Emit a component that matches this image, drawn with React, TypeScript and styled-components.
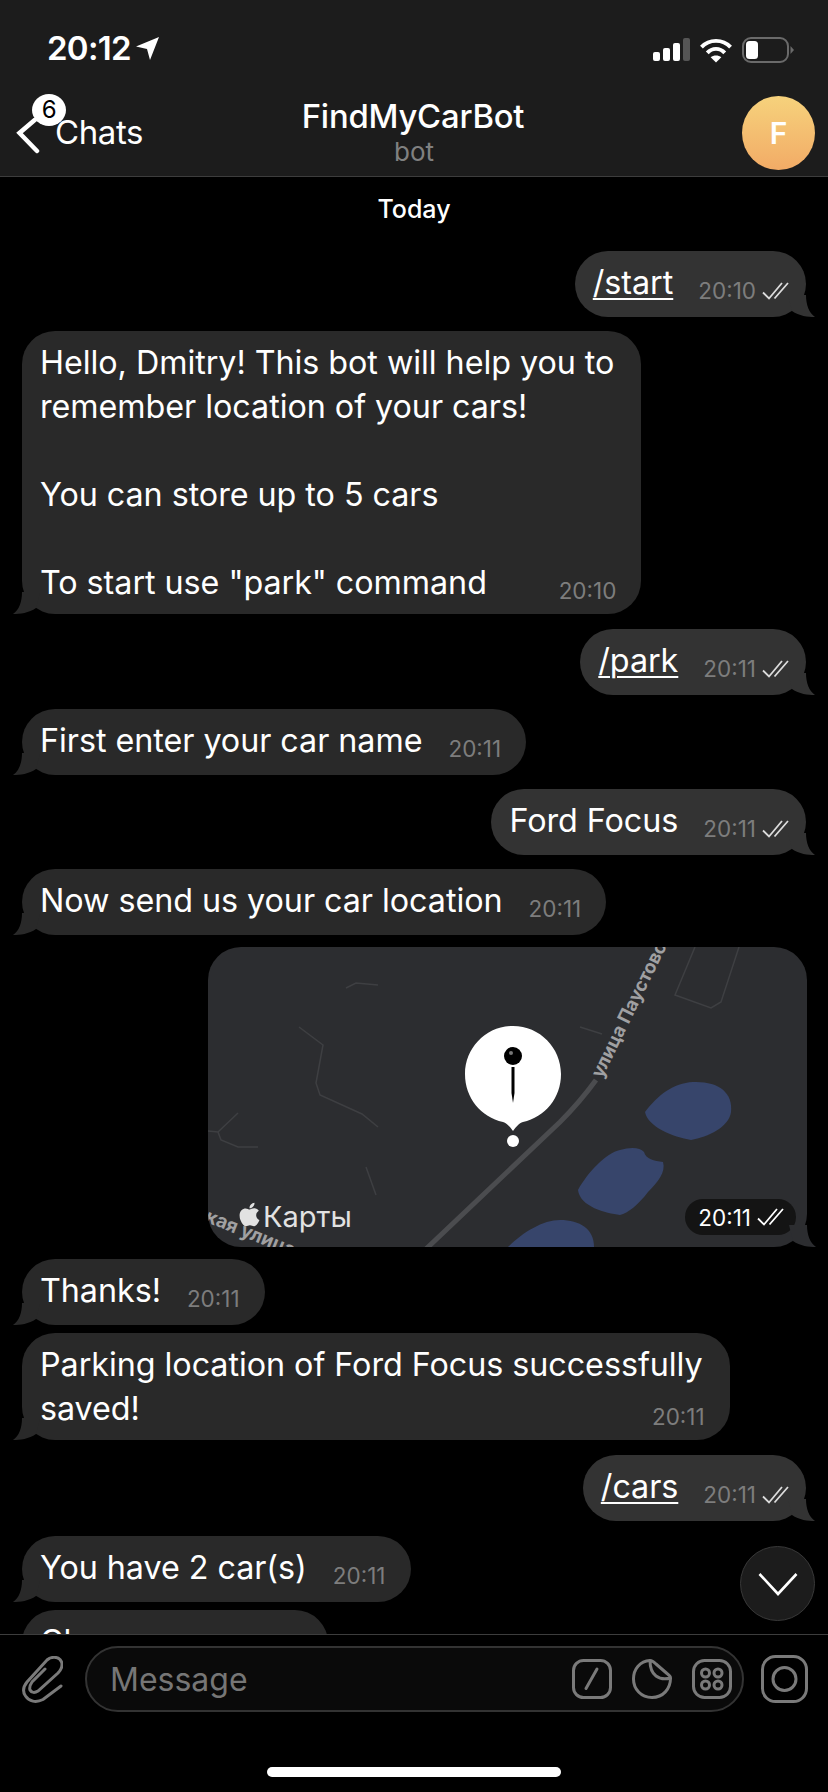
import React from "react";
import styled, { createGlobalStyle } from "styled-components";
import { FaApple } from "react-icons/fa";

const Global = createGlobalStyle`
  html, body { margin: 0; padding: 0; background: #000; }
  * { box-sizing: border-box; }
`;

const Page = styled.div`
  width: 828px;
  height: 1792px;
  background: #000;
  display: flex;
  flex-direction: column;
  font-family: Inter, "Liberation Sans", sans-serif;
  color: #fff;
  overflow: hidden;
`;

const Header = styled.header`
  height: 177px;
  flex: none;
  background: #1c1c1c;
  border-bottom: 1px solid #3d3d3d;
`;

const StatusBar = styled.div`
  height: 72px;
  padding: 30px 34px 0 47px;
  display: flex;
  justify-content: space-between;
  align-items: flex-start;
`;

const Clock = styled.div`
  display: flex;
  align-items: center;
  gap: 5px;
  font-size: 33px;
  line-height: 36px;
  font-weight: 600;
  letter-spacing: -0.7px;
`;

const StatusIcons = styled.div`
  display: flex;
  align-items: center;
  gap: 10px;
  height: 36px;
  margin-top: 2px;
`;

const NavBar = styled.nav`
  height: 104px;
  display: grid;
  grid-template-columns: 1fr auto 1fr;
`;

const BackLink = styled.div`
  position: relative;
  margin: 40px 0 0 16px;
  display: flex;
  gap: 15px;
  align-items: flex-start;
  font-size: 33px;
  line-height: 40px;
  letter-spacing: -0.4px;
  svg { margin-top: 6px; }
`;

const Badge = styled.span`
  position: absolute;
  left: 16px;
  top: -18px;
  width: 34px;
  height: 32px;
  border-radius: 50%;
  background: #fff;
  color: #000;
  font-size: 24px;
  line-height: 32px;
  text-align: center;
`;

const TitleBlock = styled.div`
  margin-top: 24px;
  text-align: center;
`;

const Title = styled.div`
  margin-right: 2px;
  font-size: 32.8px;
  line-height: 40px;
  font-weight: 500;
  letter-spacing: -0.2px;
`;

const Subtitle = styled.div`
  font-size: 26px;
  line-height: 32px;
  color: #808080;
`;

const Avatar = styled.div`
  justify-self: end;
  margin: 24px 13px 0 0;
  width: 73px;
  height: 74px;
  border-radius: 50%;
  background: linear-gradient(#f6d27c, #f2ab66);
  display: flex;
  align-items: center;
  justify-content: center;
  font-size: 30px;
  font-weight: 600;
`;

const ChatArea = styled.main`
  position: relative;
  flex: 1;
  min-height: 0;
  overflow: hidden;
  padding: 0 22px;
  display: flex;
  flex-direction: column;
`;

const DateLabel = styled.div`
  text-align: center;
  font-size: 25px;
  line-height: 32px;
  font-weight: 500;
  margin: 16px 0 26px;
`;

const Bubble = styled.div<{ $out?: boolean; $gap: number; $multi?: boolean }>`
  position: relative;
  flex: none;
  align-self: ${(p) => (p.$out ? "flex-end" : "flex-start")};
  margin-top: ${(p) => p.$gap}px;
  min-height: 66px;
  background: ${(p) => (p.$out ? "#333333" : "#292929")};
  color: ${(p) => (p.$out ? "#333333" : "#292929")};
  border-radius: 33px;
  padding: ${(p) => (p.$multi ? "10px 27px 9px 18px" : `7px ${p.$out ? 17 : 25}px 12px 18px`)};
  display: flex;
  align-items: flex-end;
  gap: ${(p) => (p.$out ? 25 : 26)}px;
`;

const Body = styled.div`
  color: #fff;
  font-size: 32.3px;
  line-height: 44px;
  letter-spacing: -0.05px;
  white-space: pre;
`;

const Link = styled.span`
  text-decoration: underline;
  text-decoration-thickness: 2px;
  text-underline-offset: 4px;
`;

const Meta = styled.div<{ $overlay?: boolean }>`
  display: flex;
  align-items: center;
  gap: 6px;
  color: #7d7d7d;
  font-size: 22.5px;
  line-height: 26px;
  margin-bottom: 1px;
  ${(p) => p.$overlay && "position: absolute; right: 25px; bottom: 10px; margin: 0;"}
`;

const TailBox = styled.svg<{ $out?: boolean }>`
  position: absolute;
  bottom: 0;
  width: 27px;
  height: 22px;
  ${(p) => (p.$out ? "right: -9px;" : "left: -9px; transform: scaleX(-1);")}
`;

const MapBubble = styled.div`
  position: relative;
  flex: none;
  align-self: flex-end;
  margin: 12px -1px 0 0;
  width: 599px;
  height: 300px;
  color: #2c2d30;
`;

const MapSurface = styled.div`
  position: relative;
  width: 100%;
  height: 100%;
  border-radius: 33px;
  overflow: hidden;
  background: #2c2d30;
  svg.map { display: block; }
`;

const MapBrand = styled.div`
  position: absolute;
  left: 28px;
  bottom: 12px;
  display: flex;
  align-items: center;
  font-size: 29px;
  line-height: 36px;
  color: #e2e2e2;
  svg { margin-top: -5px; }
`;

const MapTime = styled.div`
  position: absolute;
  right: 11px;
  bottom: 12px;
  height: 36px;
  padding: 0 12px 0 13px;
  border-radius: 18px;
  background: #141414;
  color: #fff;
  display: flex;
  align-items: center;
  gap: 6px;
  font-size: 22.5px;
`;

const ScrollDown = styled.div`
  position: absolute;
  right: 13px;
  bottom: 13px;
  width: 75px;
  height: 75px;
  border-radius: 50%;
  background: #1c1c1c;
  border: 1px solid #383838;
  display: flex;
  align-items: center;
  justify-content: center;
`;

const Composer = styled.footer`
  flex: none;
  height: 158px;
  border-top: 1px solid #3d3d3d;
  display: flex;
  flex-direction: column;
  align-items: center;
`;

const InputRow = styled.div`
  width: 100%;
  padding: 11px 20px 0 22px;
  display: flex;
  align-items: center;
`;

const Input = styled.div`
  width: 659px;
  height: 66px;
  margin: 0 17px 0 22px;
  border-radius: 33px;
  border: 2px solid #333;
  background: #0a0a0a;
  padding: 0 10px 0 23px;
  display: flex;
  align-items: center;
  gap: 20px;
`;

const Placeholder = styled.div`
  flex: 1;
  font-size: 32px;
  color: #767676;
`;

const HomeBar = styled.div`
  width: 294px;
  height: 10px;
  border-radius: 5px;
  background: #fff;
  margin-top: 55px;
`;

const Tail = ({ out }: { out?: boolean }) => (
  <TailBox $out={out} viewBox="0 0 27 22">
    <path d="M0 0H18C18 10 21 18 27 22C20 22 11 21 4 16Z" fill="currentColor" />
  </TailBox>
);

const Ticks = ({ color = "#dcdcdc" }: { color?: string }) => (
  <svg width="27" height="18" viewBox="0 0 27 18" fill="none" stroke={color} strokeWidth="1.8">
    <path d="M1 10.5L7 16.5L20 1M12.5 16.5L26 1" />
  </svg>
);

type Msg = {
  text?: React.ReactNode;
  time: string;
  out?: boolean;
  gap: number;
  overlay?: boolean;
};

const Message = ({ text, time, out, gap, overlay }: Msg) => (
  <Bubble $out={out} $gap={gap} $multi={overlay}>
    <Body>{text}</Body>
    <Meta $overlay={overlay}>
      {time}
      {out && <Ticks />}
    </Meta>
    <Tail out={out} />
  </Bubble>
);

const MapDrawing = () => (
  <svg className="map" width="599" height="300" viewBox="0 0 599 300" fill="none">
    <g stroke="#3e3f42" strokeWidth="1.5">
      <path d="M138 41L148 36L170 38" />
      <path d="M91 80L115 98L108 136L112 148L154 167L170 180" />
      <path d="M0 184L10 185L30 166M10 185L13 193L30 200H50" />
      <path d="M158 220L168 248" />
      <path d="M372 80L394 87" />
      <path d="M487 0L467 48L503 61L513 55L531 0" />
    </g>
    <path d="M218 302L352 175Q372 155 388 133" stroke="#4b4c4f" strokeWidth="5" />
    <g fill="#37456b">
      <path d="M437 165C450 148 465 136 485 135C510 134 525 145 523 165C521 180 500 190 483 193C465 190 440 180 437 165Z" />
      <path d="M370 243C380 225 398 206 412 203C422 200 432 200 436 205C438 212 446 214 455 215C458 225 450 235 440 245C430 258 420 266 412 268C398 266 372 260 370 243Z" />
      <path d="M300 300C315 285 335 273 352 273C372 273 386 282 386 300Z" />
    </g>
    <text transform="translate(394 132) rotate(-64)" fontFamily="Inter, sans-serif" fontSize="18.5" fontWeight="700" fill="#a0a0a2">улица Паустовского</text>
    <text transform="translate(-14 270) rotate(22)" fontFamily="Inter, sans-serif" fontSize="19" fontWeight="700" fill="#a0a0a2">ская улица</text>
    <g transform="translate(1 0)">
      <path d="M304 79C331 79 352 101 352 127C352 151 336 170 314 175C310 176 307 180 304 184C301 180 298 176 294 175C272 170 256 151 256 127C256 101 277 79 304 79Z" fill="#fff" />
      <circle cx="304" cy="194" r="6" fill="#fff" />
      <circle cx="304" cy="109" r="9" fill="#000" />
      <circle cx="302" cy="106" r="2" fill="#777" />
      <path d="M302.5 120H305.5V146L304 156L302.5 146Z" fill="#000" />
    </g>
  </svg>
);

export default function App() {
  return (
    <Page>
      <Global />
      <Header>
        <StatusBar>
          <Clock>
            20:12
            <svg width="23" height="23" viewBox="0 0 23 23" fill="#fff">
              <path d="M23 0L14 23L11 12L0 9.5Z" />
            </svg>
          </Clock>
          <StatusIcons>
            <svg width="37" height="24" viewBox="0 0 37 24">
              <rect x="0" y="14" width="7" height="9" rx="2" fill="#fff" />
              <rect x="10" y="10" width="7" height="13" rx="2" fill="#fff" />
              <rect x="20" y="5" width="7" height="18" rx="2" fill="#fff" />
              <rect x="30" y="0" width="7" height="23" rx="2" fill="#555" />
            </svg>
            <svg width="32" height="25" viewBox="0 0 33 25" fill="none" stroke="#fff" strokeWidth="4">
              <path d="M1.5 9C9.5 0.5 23.5 0.5 31.5 9" />
              <path d="M7.5 15C12.5 9.5 20.5 9.5 25.5 15" />
              <path d="M16.5 25L11 19.5C14 17 19 17 22 19.5Z" fill="#fff" stroke="none" />
            </svg>
            <svg width="52" height="26" viewBox="0 0 52 26">
              <rect x="1" y="1" width="45" height="24" rx="8" fill="none" stroke="#6a6a6a" strokeWidth="2" />
              <rect x="4" y="4" width="12" height="18" rx="3.5" fill="#fff" />
              <path d="M48.5 9L52 13L48.5 17Z" fill="#6a6a6a" />
            </svg>
          </StatusIcons>
        </StatusBar>
        <NavBar>
          <BackLink>
            <svg width="24" height="36" viewBox="0 0 24 36" fill="none" stroke="#fff" strokeWidth="4.5" strokeLinecap="round">
              <path d="M21 0L3.5 15L21 33" />
            </svg>
            Chats
            <Badge>6</Badge>
          </BackLink>
          <TitleBlock>
            <Title>FindMyCarBot</Title>
            <Subtitle>bot</Subtitle>
          </TitleBlock>
          <Avatar>F</Avatar>
        </NavBar>
      </Header>

      <ChatArea>
        <DateLabel>Today</DateLabel>
        <Message out gap={0} time="20:10" text={<Link>/start</Link>} />
        <Message
          gap={14}
          overlay
          time="20:10"
          text={"Hello, Dmitry! This bot will help you to\nremember location of your cars!\n\nYou can store up to 5 cars\n\nTo start use \"park\" command"}
        />
        <Message out gap={15} time="20:11" text={<Link>/park</Link>} />
        <Message gap={14} time="20:11" text="First enter your car name" />
        <Message out gap={14} time="20:11" text="Ford Focus" />
        <Message gap={14} time="20:11" text="Now send us your car location" />
        <MapBubble>
          <MapSurface>
            <MapDrawing />
            <MapBrand>
              <FaApple size={27} />
              Карты
            </MapBrand>
            <MapTime>
              20:11
              <Ticks color="#fff" />
            </MapTime>
          </MapSurface>
          <Tail out />
        </MapBubble>
        <Message gap={12} time="20:11" text="Thanks!" />
        <Message gap={8} overlay time="20:11" text={"Parking location of Ford Focus successfully\nsaved!"} />
        <Message out gap={15} time="20:11" text={<Link>/cars</Link>} />
        <Message gap={15} time="20:11" text="You have 2 car(s)" />
        <Message gap={8} time="20:11" text="Choose car:" />
        <ScrollDown>
          <svg width="40" height="24" viewBox="0 0 40 24" fill="none" stroke="#fff" strokeWidth="2.6">
            <path d="M1.5 2L20 22L38.5 2" />
          </svg>
        </ScrollDown>
      </ChatArea>

      <Composer>
        <InputRow>
          <svg width="41" height="47" viewBox="0 0 41 47" fill="none" stroke="#7a7a7a" strokeWidth="3" strokeLinecap="round">
            <path d="M39 30L21 43.5C14 47 7 45.5 3.5 40C0 35 1 31 5 26L25 4C29 0.5 35 0.5 38 3.5C41 7 40.5 12 36 17L16 35C13 37 9.5 37 8 34C7 31 8 29 10 26L23 13" />
          </svg>
          <Input>
            <Placeholder>Message</Placeholder>
            <svg width="40" height="40" viewBox="0 0 40 40" fill="none" stroke="#7a7a7a" strokeWidth="3" strokeLinecap="round">
              <rect x="1.5" y="1.5" width="37" height="37" rx="10" />
              <path d="M25 10L14 29.5" />
            </svg>
            <svg width="40" height="40" viewBox="0 0 40 40" fill="none" stroke="#7a7a7a" strokeWidth="3" strokeLinejoin="round">
              <path d="M18 1.5C8 2 1.5 10 1.5 20C1.5 30 9 38.5 20 38.5C31 38.5 38.5 30 38.5 19" />
              <path d="M18 1.5C20 1.5 22 3 24 5L35 14.5C37 16 38.5 17 38.5 19C33 20.5 28 20 24 17C20 14 18 10 18 1.5Z" />
            </svg>
            <svg width="40" height="40" viewBox="0 0 40 40" fill="none" stroke="#7a7a7a" strokeWidth="3">
              <rect x="1.5" y="1.5" width="37" height="37" rx="11" />
              <circle cx="13.5" cy="14" r="4" />
              <circle cx="26" cy="14" r="4" />
              <circle cx="13.5" cy="26" r="4" />
              <circle cx="26" cy="26" r="4" />
            </svg>
          </Input>
          <svg width="47" height="48" viewBox="0 0 47 48" fill="none" stroke="#7a7a7a" strokeWidth="3">
            <rect x="1.5" y="1.5" width="44" height="45" rx="13" />
            <circle cx="23.5" cy="24" r="11.5" />
          </svg>
        </InputRow>
        <HomeBar />
      </Composer>
    </Page>
  );
}
